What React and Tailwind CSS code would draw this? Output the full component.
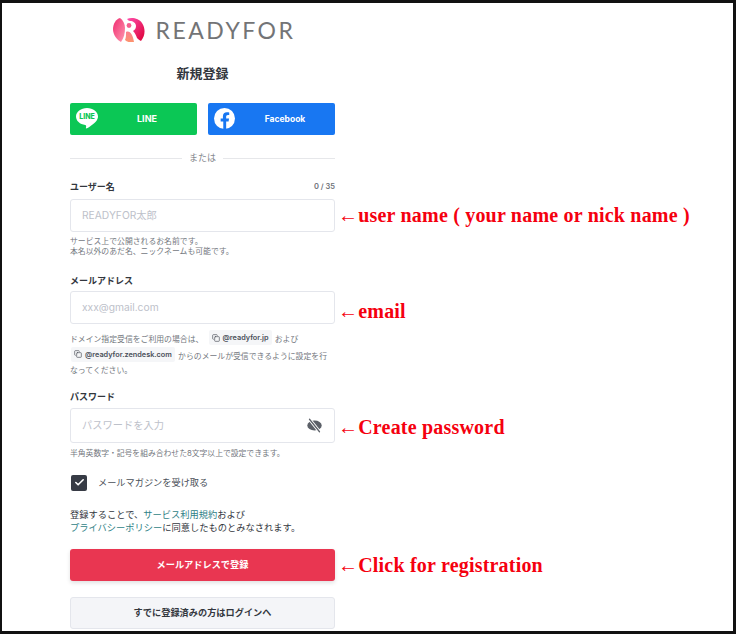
import React from 'react';
import { Check, Copy } from 'lucide-react';

const FONT = "font-['Inter','Noto_Sans_CJK_JP',sans-serif]";

function Note({ children, className = '' }) {
    return (
        <span className={`${className} ml-[3px] whitespace-nowrap font-['Liberation_Serif','Noto_Sans_CJK_JP',serif] text-[20px] leading-none font-bold tracking-[0.2px] text-[#f5000f]`}>
            {children}
        </span>
    );
}

function Field({ height, placeholder, note, noteClass, children }) {
    return (
        <div className="flex items-center w-[265px]">
            <div className={`${height} w-[265px] shrink-0 flex items-center justify-between pl-[11px] pr-3 bg-white border border-[#e4e6ec] rounded-[3px] text-[10.25px] text-[#bdc1ca]`}>
                <span>{placeholder}</span>
                {children}
            </div>
            <Note className={noteClass}>{note}</Note>
        </div>
    );
}

function Domain({ children, className = '' }) {
    return (
        <span className={`${className} inline-flex items-center h-[15px] px-[3px] mx-[1px] gap-[3px] bg-[#f5f6f8] rounded-[2px] text-[7.3px] font-semibold text-[#4a4f58]`}>
            <Copy className="w-[8px] h-[8px]" strokeWidth={2} />
            {children}
        </span>
    );
}

export default function App() {
    return (
        <div className={`${FONT} w-[736px] h-[634px] overflow-hidden bg-white border-t-[3px] border-l-[2px] border-r-[3px] border-b-[3px] border-[#111]`}>
            <div className="w-[265px] ml-[68px]">
                <div className="flex items-center justify-center h-[28px] mt-[13px] gap-[11px] pl-[3px]">
                    <svg width="32" height="24" viewBox="0 0 32 24" className="shrink-0">
                        <defs>
                            <linearGradient id="logoA" x1="0" y1="0" x2="1" y2="1">
                                <stop offset="0" stopColor="#f02a70" />
                                <stop offset="1" stopColor="#ff9ab0" />
                            </linearGradient>
                            <linearGradient id="logoB" x1="0" y1="0" x2="1" y2="1">
                                <stop offset="0" stopColor="#ff4fae" />
                                <stop offset="1" stopColor="#dc0035" />
                            </linearGradient>
                            <linearGradient id="logoC" x1="0" y1="0" x2="0" y2="1">
                                <stop offset="0" stopColor="#fb7f8f" />
                                <stop offset="1" stopColor="#fd946c" />
                            </linearGradient>
                        </defs>
                        <path d="M7 0C3 1 0 6 0 11c0 6 4 11 8 13 3-4 4-9 4-14 0-4-2-8-5-10z" fill="url(#logoA)" />
                        <path d="M14 1c4-2 12-1 15 4 4 6 3 13-1 18-2-1-3-2-4-3-1-3-2-5-4-7 2-1 3-3 3-5 0-3-3-5-6-5-1 0-2-1-3-2z" fill="url(#logoB)" />
                        <circle cx="16" cy="7.5" r="2.4" fill="#f4608e" />
                        <path d="M13 14c4-2 7 3 8 10-3 1-7 0-9-2 1-2 1-5 1-8z" fill="url(#logoC)" />
                    </svg>
                    <span className="font-['Lato',sans-serif] text-[23px] leading-none font-normal tracking-[2.5px] text-[#737476] whitespace-nowrap">READYFOR</span>
                </div>

                <h1 className="mt-[17px] text-center text-[13px] leading-[24px] font-bold text-[#33373e]">新規登録</h1>

                <div className="grid grid-cols-2 gap-[11px] mt-[18px]">
                    <div className="relative h-[32px] flex items-center justify-center pl-[27px] bg-[#0bc755] rounded-[2px] text-white text-[9px] font-bold">
                        <svg width="22" height="22" viewBox="0 0 22 22" className="absolute left-[6px] top-[5px]">
                            <path d="M11 0C5 0 0 3.800 0 8.600c0 4.300 3.900 7.800 9.200 8.500.4.100.8.300.9.600.1.300.1.700 0 1l-.2 1c0 .3-.2 1.100 1.100.6 1.200-.5 6.400-3.800 8.700-6.500C21.300 12 22 10.400 22 8.600 22 3.800 17 0 11 0z" fill="#fff" />
                            <text x="11" y="11.200" textAnchor="middle" fontSize="7" fontWeight="800" fill="#0bc755">LINE</text>
                        </svg>
                        LINE
                    </div>
                    <div className="relative h-[32px] flex items-center justify-center pl-[27px] bg-[#1877f2] rounded-[2px] text-white text-[8.5px] font-bold">
                        <svg width="21" height="21" viewBox="0 0 24 24" className="absolute left-[6px] top-[5px]">
                            <circle cx="12" cy="12" r="12" fill="#fff" />
                            <path d="M16.700 15.500l.5-3.500h-3.300V9.800c0-1 .5-1.900 2-1.900h1.500V5s-1.400-.2-2.700-.2c-2.700 0-4.500 1.600-4.500 4.600V12H7.600v3.500h3v8.400c.6.100 1.200.1 1.800.1s1 0 1.500-.1v-8.400h2.800z" fill="#1877f2" />
                        </svg>
                        Facebook
                    </div>
                </div>

                <div className="flex items-center gap-[6px] mt-[14px] h-[18px] text-[9px] text-[#85888e]">
                    <div className="flex-1 h-px bg-[#e6e7ea]" />
                    <span className="px-[1px]">または</span>
                    <div className="flex-1 h-px bg-[#e6e7ea]" />
                </div>

                <div className="flex items-center justify-between mt-[13px] h-[14px]">
                    <span className="text-[9px] font-bold text-[#33373e]">ユーザー名</span>
                    <span className="text-[7.5px] font-semibold text-[#6d7178]">0 / 35</span>
                </div>
                <div className="mt-[5px]">
                    <Field height="h-[33px]" placeholder="READYFOR太郎" note="←user name ( your name or nick name )" noteClass="pb-[1px]" />
                </div>
                <p className="mt-[5px] text-[7.85px] leading-[9.5px] text-[#73777e]">
                    サービス上で公開されるお名前です。<br />本名以外のあだ名、ニックネームも可能です。
                </p>

                <div className="mt-[18px] h-[14px] flex items-center text-[9px] font-bold text-[#33373e]">メールアドレス</div>
                <div className="mt-[3px]">
                    <Field height="h-[33px]" placeholder="xxx@gmail.com" note="←email" noteClass="pt-[6px]" />
                </div>
                <p className="mt-[6px] text-[7.85px] leading-[15px] whitespace-nowrap text-[#73777e]">
                    ドメイン指定受信をご利用の場合は、 <Domain className="ml-[3px]">@readyfor.jp</Domain> および<br />
                    <Domain>@readyfor.zendesk.com</Domain> からのメールが受信できるように設定を行<br />
                    なってください。
                </p>

                <div className="mt-[12px] h-[14px] flex items-center text-[9px] font-bold text-[#33373e]">パスワード</div>
                <div className="mt-[4px]">
                    <Field height="h-[35px]" placeholder="パスワードを入力" note="←Create password" noteClass="pt-[2px]">
                        <svg width="15" height="15" viewBox="0 0 24 24" className="shrink-0">
                            <ellipse cx="12" cy="12" rx="11.5" ry="8" fill="#5c6068" />
                            <path d="M4 2l16 20" stroke="#fff" strokeWidth="5" />
                            <path d="M4 2l16 20" stroke="#5c6068" strokeWidth="2" strokeLinecap="round" />
                        </svg>
                    </Field>
                </div>
                <p className="mt-[5px] text-[7.8px] leading-[10px] text-[#73777e]">半角英数字・記号を組み合わせた8文字以上で設定できます。</p>

                <div className="flex items-center gap-[11px] mt-[16px] ml-[1px] h-[17px]">
                    <div className="w-[16px] h-[16px] flex items-center justify-center rounded-[2px] bg-[#373b45]">
                        <Check className="w-[11px] h-[11px] text-white" strokeWidth={3.5} />
                    </div>
                    <span className="text-[9.2px] text-[#4a4f58]">メールマガジンを受け取る</span>
                </div>

                <p className="mt-[17px] text-[9.25px] leading-[13px] text-[#33373e]">
                    登録することで、<span className="text-[#2f7f86]">サービス利用規約</span>および<br />
                    <span className="text-[#2f7f86]">プライバシーポリシー</span>に同意したものとみなされます。
                </p>

                <div className="mt-[15px] flex items-center w-[265px]">
                    <div className="h-[32px] w-[265px] shrink-0 flex items-center justify-center bg-[#e93651] rounded-[3px] text-[9.2px] font-bold text-white shadow-[0_2px_4px_rgba(0,0,0,0.12)]">
                        メールアドレスで登録
                    </div>
                    <Note>←Click for registration</Note>
                </div>

                <div className="mt-[16px] h-[32px] flex items-center justify-center bg-[#f4f5f8] border border-[#e4e6ec] rounded-[3px] text-[9.2px] font-bold text-[#33373e]">
                    すでに登録済みの方はログインへ
                </div>
            </div>
        </div>
    );
}
